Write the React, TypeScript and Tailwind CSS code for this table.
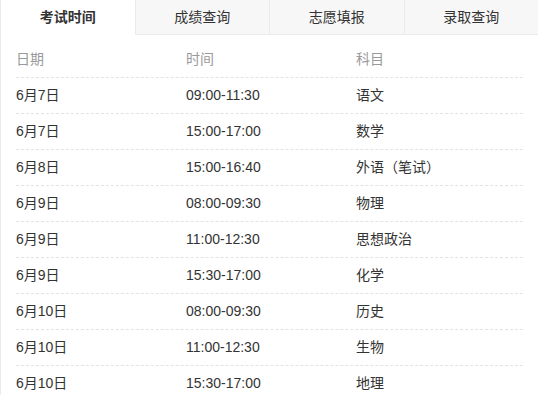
import React, { useState } from 'react';

const tabs = ['考试时间', '成绩查询', '志愿填报', '录取查询'];

const rows: [string, string, string][] = [
  ['6月7日', '09:00-11:30', '语文'],
  ['6月7日', '15:00-17:00', '数学'],
  ['6月8日', '15:00-16:40', '外语（笔试）'],
  ['6月9日', '08:00-09:30', '物理'],
  ['6月9日', '11:00-12:30', '思想政治'],
  ['6月9日', '15:30-17:00', '化学'],
  ['6月10日', '08:00-09:30', '历史'],
  ['6月10日', '11:00-12:30', '生物'],
  ['6月10日', '15:30-17:00', '地理'],
];

export default function App() {
  const [active, setActive] = useState(0);

  return (
    <div
      className="w-[538px] h-[395px] overflow-hidden bg-white border-l border-[#ebebeb] text-[14px] text-[#333]"
      style={{ fontFamily: '"Liberation Sans", "Noto Sans CJK SC", sans-serif' }}
    >
      {/* Tabs */}
      <div className="flex h-[35px]">
        {tabs.map((t, i) => (
          <button
            key={t}
            onClick={() => setActive(i)}
            className={`flex-1 flex items-center justify-center ${
              i === active
                ? 'bg-white font-bold'
                : 'bg-[#f7f7f7] border-b border-[#ebebeb]'
            } ${i > 0 ? 'border-l border-[#ebebeb]' : ''}`}
          >
            {t}
          </button>
        ))}
      </div>

      {/* Schedule table */}
      <div className="px-[15px] pt-[7px]">
        <div className="flex h-[36px] items-center border-b border-dashed border-[#e3e3e3] text-[#999]">
          <span className="w-[170px]">日期</span>
          <span className="w-[170px]">时间</span>
          <span>科目</span>
        </div>
        {rows.map(([d, t, s], i) => (
          <div key={i} className="flex h-[36px] items-center border-b border-dashed border-[#e3e3e3]">
            <span className="w-[170px]">{d}</span>
            <span className="w-[170px]">{t}</span>
            <span>{s}</span>
          </div>
        ))}
      </div>
    </div>
  );
}
